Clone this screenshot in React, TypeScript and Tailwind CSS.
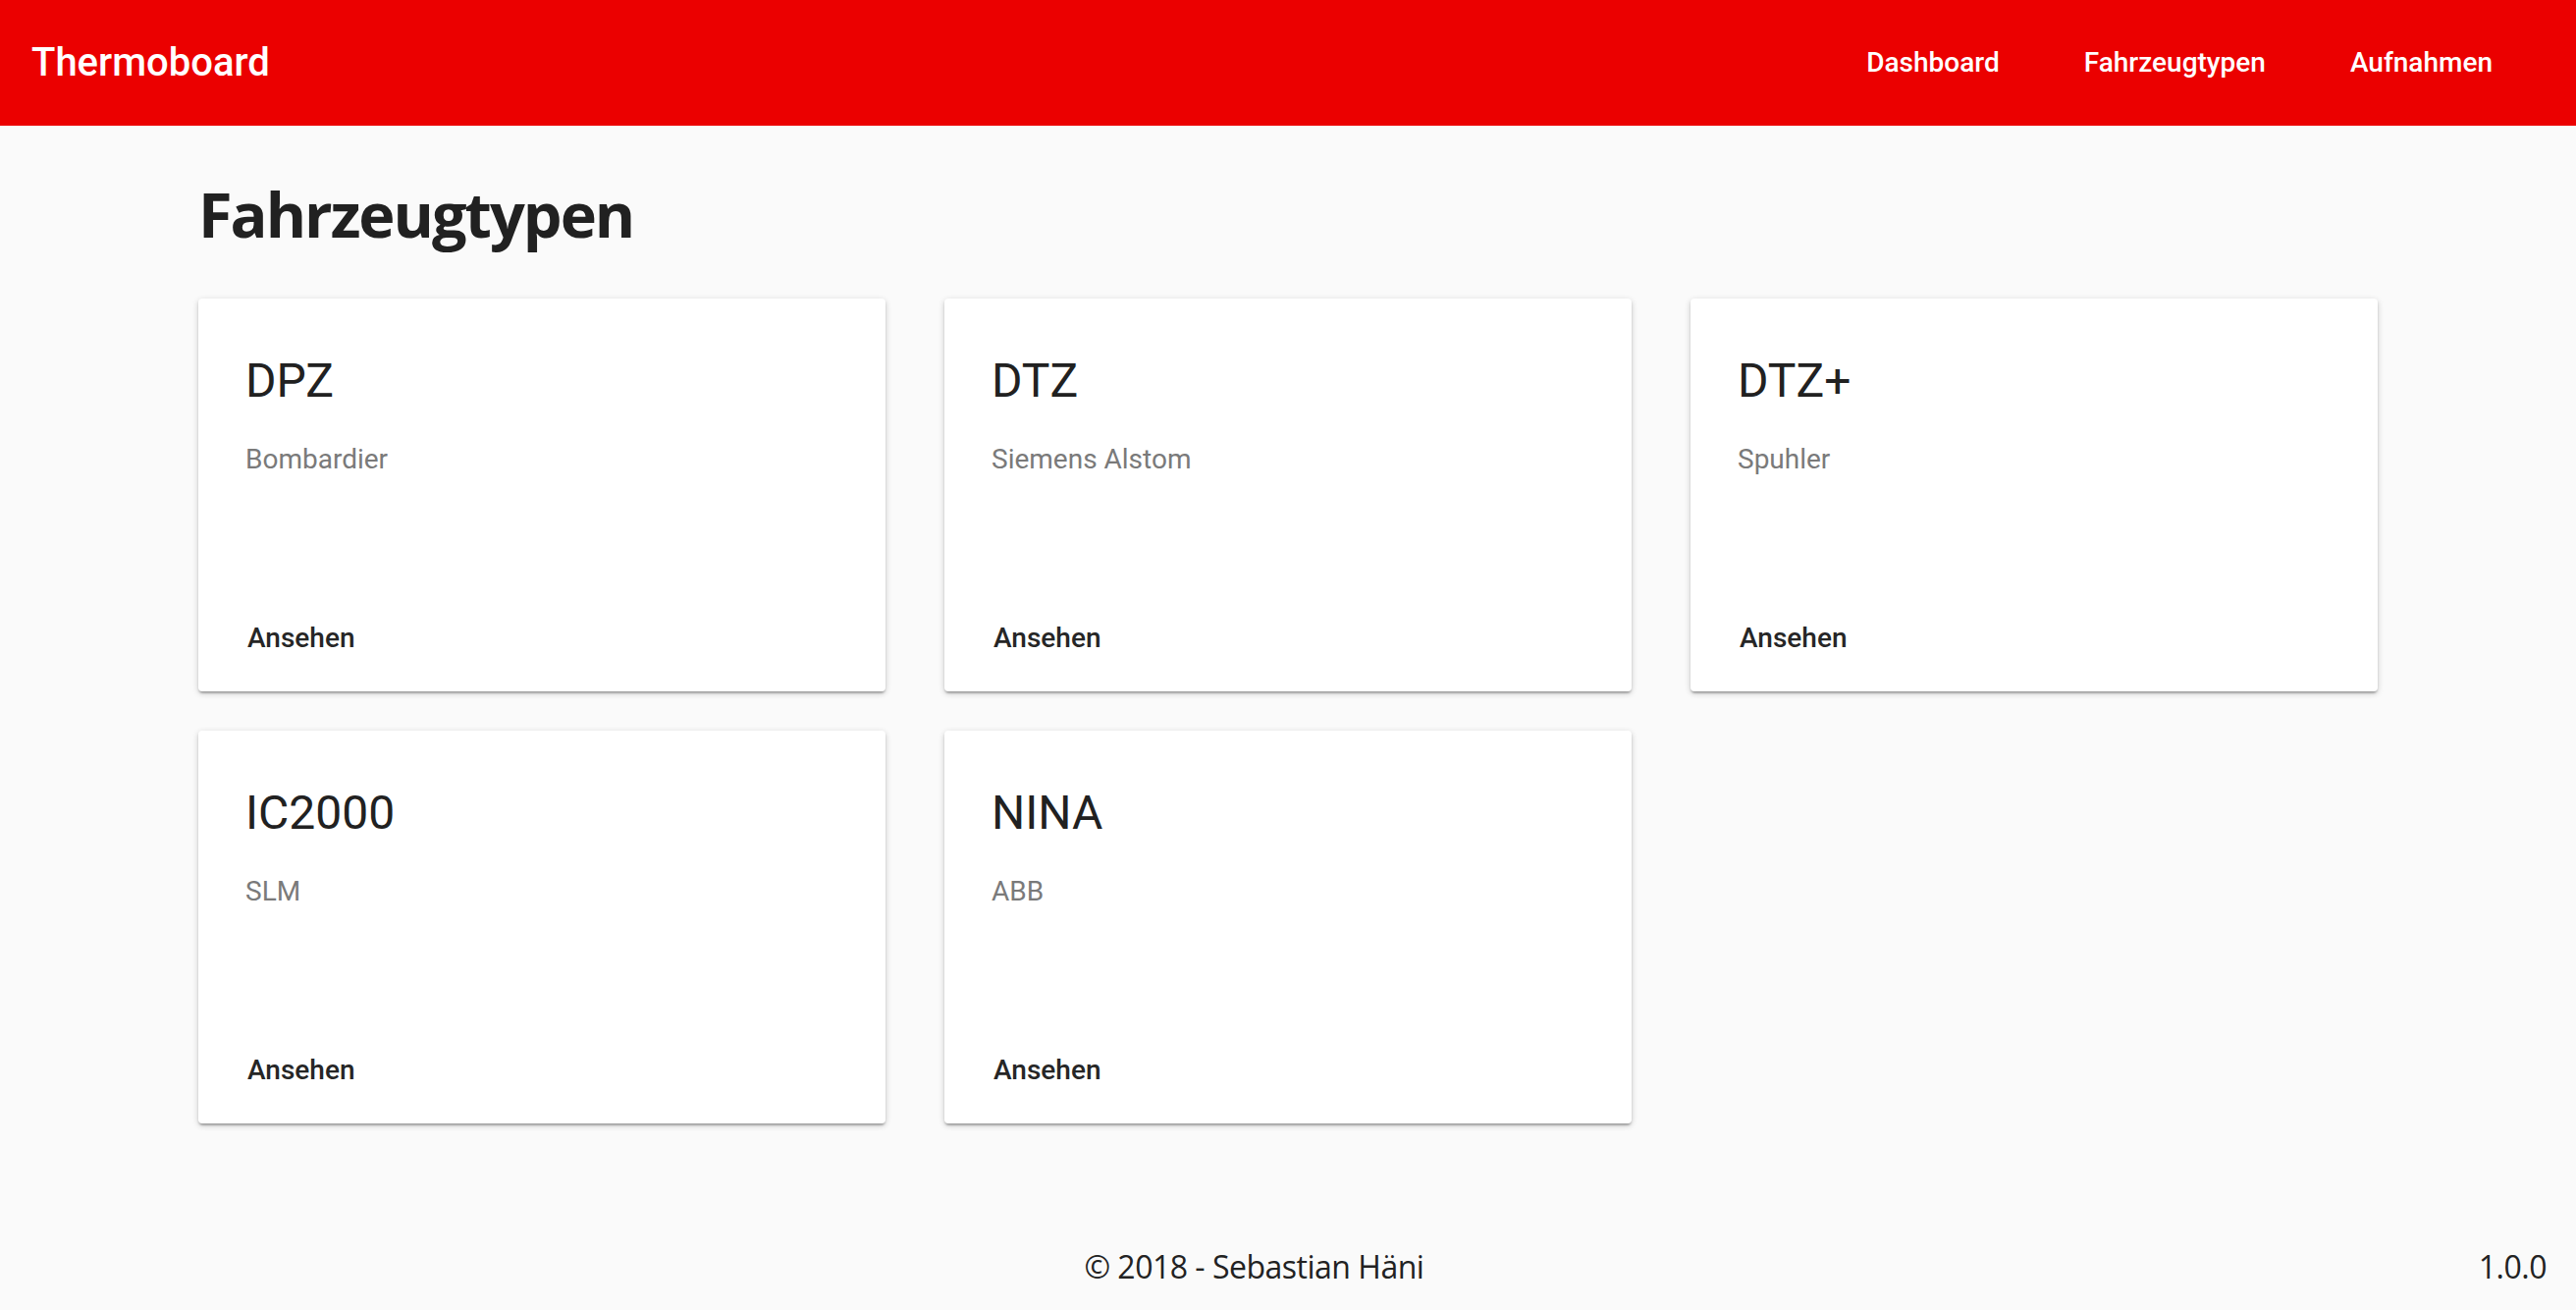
import React from "react";

const cards = [
  { title: "DPZ", maker: "Bombardier" },
  { title: "DTZ", maker: "Siemens Alstom" },
  { title: "DTZ+", maker: "Spuhler" },
  { title: "IC2000", maker: "SLM" },
  { title: "NINA", maker: "ABB" },
];

function Card({ title, maker }: { title: string; maker: string }) {
  return (
    <div className="flex h-[400px] flex-col rounded-[4px] bg-white shadow-[0_2px_6px_rgba(0,0,0,0.2),0_2px_2px_rgba(0,0,0,0.14),0_4px_2px_-2px_rgba(0,0,0,0.12)]">
      <div className="flex-1 pl-[48px] pt-[52px]">
        <div className="text-[48px] font-normal leading-[64px] text-[#212121] [font-family:Roboto,'Noto_Sans',sans-serif]">
          {title}
        </div>
        <div className="mt-[28px] text-[28px] font-normal leading-[40px] text-[#7a7a7a] [font-family:Roboto,'Noto_Sans',sans-serif]">
          {maker}
        </div>
      </div>
      <div className="flex pb-[18px] pl-[18px]">
        <button className="flex h-[72px] items-center rounded-[4px] px-[32px] text-[28px] font-medium text-[#262626] [font-family:Roboto,'Noto_Sans',sans-serif]">
          Ansehen
        </button>
      </div>
    </div>
  );
}

export default function App() {
  return (
    <div className="flex min-h-screen flex-col bg-[#fafafa]">
      <header className="flex h-[128px] items-center bg-[#eb0000] pl-[32px] pr-[42px] text-white [font-family:Roboto,'Noto_Sans',sans-serif]">
        <div className="flex-1 text-[40px] font-medium">Thermoboard</div>
        <nav className="flex items-center">
          {["Dashboard", "Fahrzeugtypen", "Aufnahmen"].map((n) => (
            <a key={n} className="px-[43px] text-[28px] font-medium text-white">
              {n}
            </a>
          ))}
        </nav>
      </header>

      <main className="flex-1">
        <div className="mx-auto w-[2220px]">
          <h1 className="mt-[50px] text-[63px] font-bold leading-[80px] tracking-[-2px] text-[#212121] [font-family:'Open_Sans','Noto_Sans',sans-serif]">
            Fahrzeugtypen
          </h1>
          <div className="mt-[46px] grid grid-cols-3 gap-x-[60px] gap-y-[40px]">
            {cards.map((c) => (
              <Card key={c.title} title={c.title} maker={c.maker} />
            ))}
          </div>
        </div>
      </main>

      <footer className="flex h-[88px] items-center text-[32px] leading-[48px] tracking-[-0.5px] text-[#222222] [font-family:'Open_Sans','Noto_Sans',sans-serif]">
        <div className="flex-1 pl-[30px] text-center">© 2018 - Sebastian Häni</div>
        <div className="pr-[30px]">1.0.0</div>
      </footer>
    </div>
  );
}
